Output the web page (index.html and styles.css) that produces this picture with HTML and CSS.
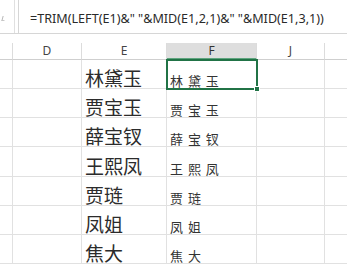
FILE: index.html
```html
<!DOCTYPE html>
<html>
<head>
<meta charset="utf-8">
<link rel="stylesheet" href="styles.css">
</head>
<body>
<div class="screen">
  <div class="formula-bar">
    <div class="fx"><span class="fx-mark"></span></div>
    <div class="formula-box">=TRIM(LEFT(E1)&amp;" "&amp;MID(E1,2,1)&amp;" "&amp;MID(E1,3,1))</div>
  </div>
  <div class="sheet">
    <div class="hdr corner"></div>
    <div class="hdr">D</div>
    <div class="hdr">E</div>
    <div class="hdr active">F</div>
    <div class="hdr">J</div>
    <div class="hdr last"></div>

    <div class="cell rh"></div><div class="cell"></div><div class="cell big">林黛玉</div><div class="cell small selected">林 黛 玉<span class="handle"></span></div><div class="cell"></div><div class="cell last"></div>
    <div class="cell rh"></div><div class="cell"></div><div class="cell big">贾宝玉</div><div class="cell small">贾 宝 玉</div><div class="cell"></div><div class="cell last"></div>
    <div class="cell rh"></div><div class="cell"></div><div class="cell big">薛宝钗</div><div class="cell small">薛 宝 钗</div><div class="cell"></div><div class="cell last"></div>
    <div class="cell rh"></div><div class="cell"></div><div class="cell big">王熙凤</div><div class="cell small">王 熙 凤</div><div class="cell"></div><div class="cell last"></div>
    <div class="cell rh"></div><div class="cell"></div><div class="cell big">贾琏</div><div class="cell small">贾 琏</div><div class="cell"></div><div class="cell last"></div>
    <div class="cell rh"></div><div class="cell"></div><div class="cell big">凤姐</div><div class="cell small">凤 姐</div><div class="cell"></div><div class="cell last"></div>
    <div class="cell rh"></div><div class="cell"></div><div class="cell big">焦大</div><div class="cell small">焦 大</div><div class="cell"></div><div class="cell last"></div>
  </div>
</div>
</body>
</html>
```
FILE: styles.css
```css
* { box-sizing: border-box; }
html, body { margin: 0; padding: 0; background: #fff; }
.screen {
  width: 347px;
  height: 267px;
  overflow: hidden;
  background: #fff;
  font-family: "Noto Sans", "Noto Sans CJK SC", sans-serif;
}
.formula-bar {
  display: flex;
  height: 34px;
  border-bottom: 1px solid #d6d6d6;
}
.fx {
  width: 15px;
  border-right: 1px solid #e0e0e0;
  display: flex;
  align-items: center;
  padding-left: 2px;
}
.fx-mark {
  display: block;
  width: 3px;
  height: 5px;
  border-left: 1px solid #b8b8b8;
  border-bottom: 1px solid #c8c8c8;
  transform: skewX(-15deg);
  margin-top: 4px;
}
.formula-box {
  margin-left: 3px;
  flex: 1;
  border-left: 1px solid #d6d6d6;
  padding-left: 11px;
  display: flex;
  align-items: center;
  font-size: 12.6px;
  color: #2a2a2a;
  white-space: nowrap;
  padding-top: 3px;
}
.sheet {
  margin-top: 9px;
  display: grid;
  grid-template-columns: 13px 69px 85px 90px 68px 22px;
  grid-template-rows: 17px repeat(7, 29.15px);
}
.hdr {
  border-right: 1px solid #dcdcdc;
  border-bottom: 1px solid #cfcfcf;
  font-size: 12px;
  color: #444;
  text-align: center;
  line-height: 16px;
}
.hdr.active {
  background: #dedede;
  border-bottom: 2px solid #5fa57f;
  color: #333;
}
.cell {
  border-right: 1px solid #e1e1e1;
  border-bottom: 1px solid #e1e1e1;
  display: flex;
  align-items: flex-end;
  padding-left: 3px;
  white-space: nowrap;
  font-family: "Noto Sans CJK SC", sans-serif;
  color: #2b2b2b;
  position: relative;
}
.cell.last, .hdr.last { border-right: none; }
.big {
  font-size: 19px;
  line-height: 19px;
  padding-bottom: 1px;
}
.small {
  font-size: 13px;
  line-height: 13px;
  padding-bottom: 1px;
  word-spacing: 2px;
  color: #333;
}
.selected {
  outline: 2px solid #217346;
  outline-offset: -1px;
  z-index: 1;
}
.handle {
  position: absolute;
  right: -4px;
  bottom: -4px;
  width: 6px;
  height: 6px;
  background: #217346;
  border: 1px solid #fff;
}
```
